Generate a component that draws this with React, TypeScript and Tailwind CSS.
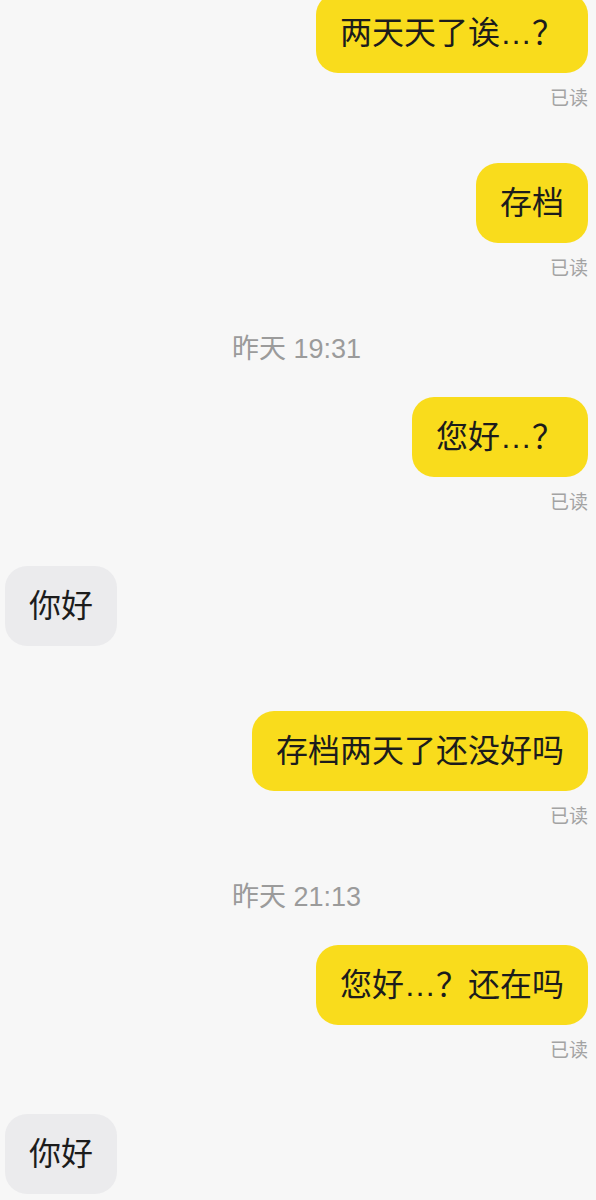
import React from 'react';

type Item =
  | { kind: 'me'; text: string; mt: string }
  | { kind: 'them'; text: string; mt: string }
  | { kind: 'time'; text: string; mt: string };

// margins reproduce the screenshot spacing between groups
const items: Item[] = [
  { kind: 'me', text: '两天天了诶…？', mt: '-mt-[7px]' },
  { kind: 'me', text: '存档', mt: 'mt-[52px]' },
  { kind: 'time', text: '昨天 19:31', mt: 'mt-[52px]' },
  { kind: 'me', text: '您好…？', mt: 'mt-[32px]' },
  { kind: 'them', text: '你好', mt: 'mt-[51px]' },
  { kind: 'me', text: '存档两天了还没好吗', mt: 'mt-[65px]' },
  { kind: 'time', text: '昨天 21:13', mt: 'mt-[52px]' },
  { kind: 'me', text: '您好…？还在吗', mt: 'mt-[32px]' },
  { kind: 'them', text: '你好', mt: 'mt-[51px]' },
];

const font = "font-['Liberation_Sans','Noto_Sans_CJK_SC',sans-serif]";

function Bubble({ text, mine }: { text: string; mine: boolean }) {
  return (
    <div
      className={`h-[80px] px-[24px] flex items-center rounded-[22px] text-[32px] leading-[32px] text-[#1c1c1c] whitespace-nowrap ${
        mine ? 'bg-[#f9dc1c]' : 'bg-[#ebebed]'
      }`}
    >
      {text}
    </div>
  );
}

export default function App() {
  return (
    <div className={`w-[596px] h-[1200px] overflow-hidden bg-[#f7f7f7] ${font}`}>
      <div className="flex flex-col pl-[5px] pr-[8px]">
        {items.map((item, i) => {
          if (item.kind === 'time') {
            return (
              <div
                key={i}
                className={`${item.mt} h-[32px] flex items-center justify-center text-[27px] leading-[32px] text-[#9b9b9b]`}
              >
                {item.text}
              </div>
            );
          }
          if (item.kind === 'them') {
            return (
              <div key={i} className={`${item.mt} flex justify-start`}>
                <Bubble text={item.text} mine={false} />
              </div>
            );
          }
          return (
            <div key={i} className={`${item.mt} flex flex-col items-end`}>
              <Bubble text={item.text} mine />
              <div className="mt-[14px] h-[24px] text-[19px] leading-[24px] text-[#a3a3a3]">已读</div>
            </div>
          );
        })}
      </div>
    </div>
  );
}
